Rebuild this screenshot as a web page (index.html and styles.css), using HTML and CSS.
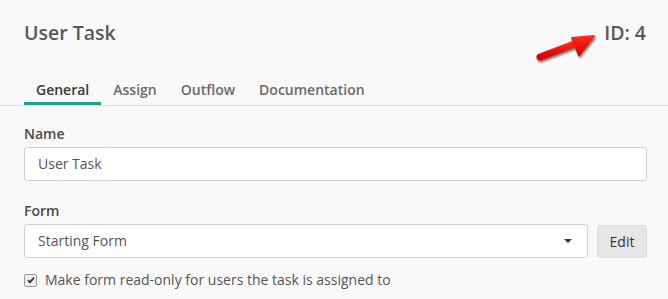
FILE: index.html
```html
<!DOCTYPE html>
<html>
<head>
<meta charset="utf-8">
<link rel="stylesheet" href="styles.css">
</head>
<body>
<div class="panel">
  <header class="head">
    <h1 class="title">User Task</h1>
    <div class="id">ID: 4</div>
    <svg class="arrow" width="80" height="44" viewBox="0 0 80 44">
      <defs>
        <filter id="sh" x="-20%" y="-20%" width="150%" height="160%">
          <feDropShadow dx="1" dy="2" stdDeviation="1.3" flood-color="#000" flood-opacity="0.55"/>
        </filter>
        <linearGradient id="rg" x1="0" y1="0" x2="0" y2="1">
          <stop offset="0" stop-color="#ff2a1a"/>
          <stop offset="1" stop-color="#d80000"/>
        </linearGradient>
      </defs>
      <g filter="url(#sh)">
        <line x1="13" y1="33" x2="50" y2="19" stroke="url(#rg)" stroke-width="7" stroke-linecap="round"/>
        <polygon points="67,12 45,14 52,31" fill="url(#rg)" stroke="url(#rg)" stroke-width="2" stroke-linejoin="round"/>
      </g>
    </svg>
  </header>
  <nav class="tabs">
    <span class="tab active">General</span>
    <span class="tab">Assign</span>
    <span class="tab">Outflow</span>
    <span class="tab">Documentation</span>
  </nav>
  <section class="form">
    <label class="label">Name</label>
    <div class="input">User Task</div>
    <label class="label form-label">Form</label>
    <div class="row">
      <div class="input select">
        <span>Starting Form</span>
        <span class="caret"></span>
      </div>
      <button class="btn">Edit</button>
    </div>
    <div class="check-row">
      <span class="checkbox">
        <svg width="8" height="8" viewBox="0 0 8 8"><path d="M1 4.2 L3 6.3 L7 1.5" fill="none" stroke="#333" stroke-width="1.8" stroke-linejoin="round"/></svg>
      </span>
      <span class="check-text">Make form read-only for users the task is assigned to</span>
    </div>
  </section>
</div>
</body>
</html>
```
FILE: styles.css
```css
* { box-sizing: border-box; }
html, body {
  margin: 0;
  background: #f9f9f9;
  font-family: "Open Sans", "Noto Sans", sans-serif;
  color: #555;
}
.panel {
  width: 668px;
  height: 299px;
  overflow: hidden;
}
.head {
  position: relative;
  display: flex;
  justify-content: space-between;
  align-items: flex-start;
  padding: 19px 22px 0 24px;
  height: 80px;
}
.title {
  margin: 0;
  font-size: 19.5px;
  line-height: 28px;
  font-weight: 600;
  color: #585858;
}
.id {
  font-size: 19.5px;
  line-height: 28px;
  font-weight: 600;
  color: #585858;
}
.arrow {
  position: absolute;
  left: 527px;
  top: 24px;
}
.tabs {
  display: flex;
  padding-left: 24px;
  border-bottom: 1px solid #dedede;
}
.tab {
  font-size: 14px;
  line-height: 20px;
  font-weight: 600;
  color: #6a6a6a;
  padding: 0 12px 2px;
  border-bottom: 3px solid transparent;
}
.tab.active {
  color: #3a3a3a;
  border-bottom-color: #1aa38a;
}
.form {
  display: flex;
  flex-direction: column;
  padding: 18px 21px 0 24px;
}
.label {
  font-size: 14px;
  line-height: 20px;
  font-weight: 600;
  color: #4a4a4a;
  margin-bottom: 3px;
}
.form-label {
  margin-top: 20px;
}
.input {
  height: 34px;
  flex: none;
  background: #fff;
  border: 1px solid #cfcfcf;
  border-radius: 3px;
  font-size: 14px;
  line-height: 32px;
  color: #555;
  padding: 0 13px;
}
.row {
  display: flex;
  gap: 9px;
}
.select {
  flex: 1;
  display: flex;
  justify-content: space-between;
  align-items: center;
}
.caret {
  width: 0;
  height: 0;
  border-left: 4px solid transparent;
  border-right: 4px solid transparent;
  border-top: 4px solid #333;
  margin-right: 2px;
}
.btn {
  width: 50px;
  height: 33px;
  margin-top: 1px;
  border: 1px solid #ddd;
  border-radius: 3px;
  background: #e6e6e6;
  font-family: inherit;
  font-size: 14px;
  color: #333;
  padding: 0;
}
.check-row {
  display: flex;
  align-items: center;
  margin-top: 12px;
  gap: 8px;
}
.checkbox {
  width: 13px;
  height: 13px;
  border: 1px solid #999;
  border-radius: 2px;
  background: #eee;
  display: flex;
  align-items: center;
  justify-content: center;
}
.check-text {
  font-size: 14px;
  line-height: 20px;
  color: #555;
}
```
